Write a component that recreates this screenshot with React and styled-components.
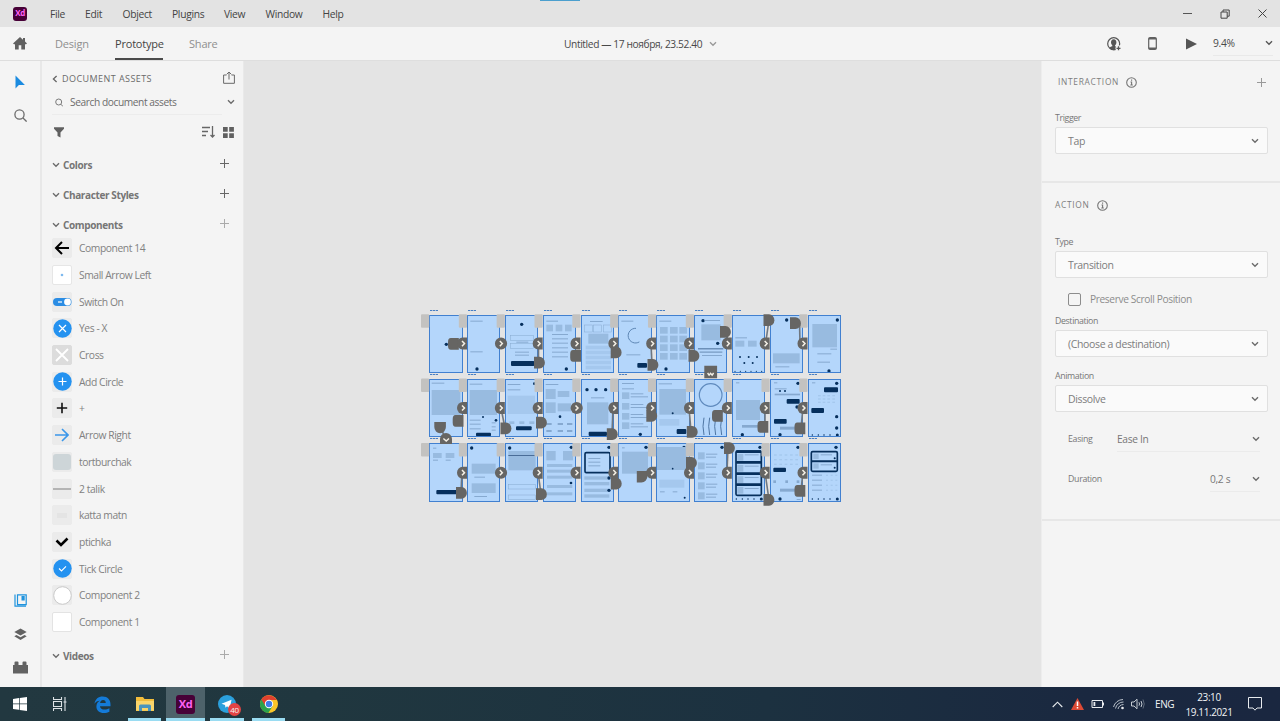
import React from "react";
import styled, { createGlobalStyle } from "styled-components";

const GlobalStyle = createGlobalStyle`
  * { box-sizing: border-box; }
  body { margin: 0; overflow: hidden; background: #f4f4f4; }
  svg { display: block; flex: none; }
`;

const Page = styled.div`
  width: 1280px;
  height: 721px;
  display: flex;
  flex-direction: column;
  font-family: "Open Sans", "Noto Sans", sans-serif;
  font-size: 10.3px;
  letter-spacing: -0.32px;
  color: #6c6c6c;
  line-height: 14px;
  white-space: nowrap;
`;

/* ---------- top bars ---------- */

const MenuBar = styled.header`
  position: relative;
  height: 27px;
  flex: none;
  display: flex;
  align-items: center;
  background: #e3e3e3;
  padding-left: 13px;
`;

const TopAccent = styled.div`
  position: absolute;
  left: 540px;
  top: 0;
  width: 40px;
  height: 1px;
  background: #4b9fce;
`;

const XdBadge = styled.div`
  width: ${(p) => p.$size}px;
  height: ${(p) => p.$size}px;
  flex: none;
  display: flex;
  align-items: center;
  justify-content: center;
  border-radius: 3px;
  background: #470137;
  color: #ff61f6;
  font-weight: 700;
  font-size: ${(p) => p.$font}px;
  line-height: 1;
  letter-spacing: -0.5px;
  padding-bottom: 1px;
`;

const MenuList = styled.nav`
  display: flex;
  margin-left: 23px;
  color: #444;
`;

const MenuItem = styled.span`
  width: ${(p) => p.$w}px;
`;

const WindowButtons = styled.div`
  display: flex;
  align-items: center;
  gap: 28px;
  margin-left: auto;
  padding-right: 13px;
`;

const ToolBar = styled.div`
  height: 34px;
  flex: none;
  display: flex;
  align-items: center;
  background: #f4f4f4;
  border-bottom: 1px solid #dedede;
  padding-left: 13px;
`;

const Tabs = styled.nav`
  display: flex;
  gap: 26px;
  margin-left: 28px;
`;

const Tab = styled.span`
  width: ${(p) => p.$w}px;
  height: 33px;
  line-height: 34px;
  font-size: 11px;
  letter-spacing: -0.2px;
  color: ${(p) => (p.$on ? "#444" : "#8f8f8f")};
  border-bottom: 2px solid ${(p) => (p.$on ? "#4b4b4b" : "transparent")};
`;

const DocTitle = styled.div`
  display: flex;
  align-items: center;
  gap: 7px;
  margin-left: 347px;
  font-size: 10.2px;
  letter-spacing: -0.38px;
  color: #484848;
`;

const ToolBarRight = styled.div`
  display: flex;
  align-items: center;
  margin-left: auto;
  padding-right: 7px;
`;

const Zoom = styled.div`
  width: 60px;
  height: 24px;
  margin-left: 16px;
  display: flex;
  align-items: center;
  justify-content: space-between;
  border-bottom: 1px solid #e9e9e9;
  color: #4a4a4a;
  padding-bottom: 1px;
`;

const IconGap = styled.span`
  width: ${(p) => p.$w}px;
  flex: none;
`;

/* ---------- body ---------- */

const Body = styled.main`
  flex: 1;
  min-height: 0;
  display: flex;
`;

const Rail = styled.aside`
  width: 42px;
  flex: none;
  display: flex;
  flex-direction: column;
  align-items: center;
  background: #f4f4f4;
  border-right: 2px solid #e8e8e8;
  padding: 14px 0 12px 0;
`;

const RailGap = styled.div`
  height: ${(p) => p.$h}px;
  flex: none;
`;

const Assets = styled.aside`
  width: 202px;
  flex: none;
  background: #f4f4f4;
  border-right: 1px solid #e9e9e9;
  padding: 9px 6px 0 10px;
`;

const AssetsHead = styled.div`
  height: 18px;
  display: flex;
  align-items: center;
  gap: 4px;
  font-size: 9px;
  letter-spacing: 0.44px;
  color: #6a6a6a;
  padding-right: 2px;
`;

const Push = styled.div`
  margin-left: auto;
  display: flex;
  align-items: center;
  gap: 8px;
  padding-bottom: ${(p) => p.$lift || 0}px;
`;

const SearchRow = styled.div`
  height: 27px;
  width: 170px;
  display: flex;
  align-items: center;
  border-bottom: 1px solid #ececec;
  padding: 2px 0 0 3px;
  margin-bottom: 6px;
`;

const SearchText = styled.span`
  margin-left: 7px;
  width: 155px;
  flex: none;
  font-size: 10.2px;
  letter-spacing: -0.42px;
`;

const SearchArrow = styled.span`
  margin-left: 2px;
`;

const FilterRow = styled.div`
  height: 22px;
  display: flex;
  align-items: center;
  padding: 0 3px 0 2px;
`;

const Group = styled.div`
  height: 30px;
  margin-top: ${(p) => p.$mt || 0}px;
  display: flex;
  align-items: center;
  gap: 3px;
  font-weight: 700;
  font-size: 10px;
  letter-spacing: -0.38px;
  padding-right: 8px;
  color: #767676;
`;

const PlusWrap = styled.span`
  margin-left: auto;
  padding-bottom: 4px;
`;

const ItemList = styled.div`
  margin-top: -5px;
`;

const Item = styled.div`
  height: 26.7px;
  display: flex;
  align-items: center;
  gap: 7px;
  color: #818181;
  font-size: 10.3px;
  letter-spacing: -0.42px;
`;

const Thumb = styled.div`
  width: 20px;
  height: 20px;
  flex: none;
  background: ${(p) => p.$bg || "#ebebeb"};
  border: 1px solid ${(p) => p.$line || "#ebebeb"};
  border-radius: 2px;
  display: flex;
  align-items: center;
  justify-content: center;
`;

const Canvas = styled.section`
  position: relative;
  flex: 1;
  background: #e4e4e4;
`;

const Board = styled.div`
  position: absolute;
  left: ${(p) => p.$x}px;
  top: ${(p) => p.$y}px;
  width: 33.4px;
  height: 58.5px;
  background: #b4d6fb;
  outline: 1px solid #4180d0;
  outline-offset: -1px;
`;

const BoardLabel = styled.div`
  position: absolute;
  left: 1px;
  top: -5px;
  width: 8px;
  height: 1px;
  background: repeating-linear-gradient(90deg, #477fc4 0 2px, #a9bcd4 2px 3px);
`;

const Wires = styled.svg`
  position: absolute;
  left: 0;
  top: 0;
`;

/* ---------- right panel ---------- */

const Inspector = styled.aside`
  width: 239px;
  flex: none;
  background: #f4f4f4;
  border-left: 1px solid #ededed;
  color: #777;
`;

const Section = styled.section`
  height: ${(p) => p.$h}px;
  padding: ${(p) => p.$pt}px 12px 0 13px;
  border-bottom: 2px solid #e7e7e7;
`;

const Heading = styled.div`
  display: flex;
  align-items: center;
  gap: 7px;
  height: 16px;
  padding-left: ${(p) => p.$pl || 0}px;
  font-size: 8.4px;
  letter-spacing: 0.7px;
  color: #7d7d7d;
`;

const PlusPad = styled.span`
  padding-right: 2px;
`;

const Label = styled.div`
  height: 14px;
  margin-top: ${(p) => p.$mt}px;
  font-size: 8.8px;
  letter-spacing: -0.38px;
`;

const Select = styled.div`
  height: 27px;
  margin-top: 2px;
  display: flex;
  align-items: center;
  justify-content: space-between;
  border: 1px solid #e0e0e0;
  border-radius: 2px;
  background: #fafafa;
  color: #7d7d7d;
  padding: 0 8px 0 12px;
  font-size: 10.5px;
  letter-spacing: -0.36px;
`;

const CheckRow = styled.div`
  height: 16px;
  margin-top: 13px;
  padding-left: 13px;
  display: flex;
  align-items: center;
  gap: 9px;
  color: #8c8c8c;
  font-size: 10.2px;
  letter-spacing: -0.38px;
`;

const Box = styled.span`
  width: 13px;
  height: 13px;
  border: 1.5px solid #8c8c8c;
  border-radius: 2px;
`;

const Field = styled.div`
  display: flex;
  align-items: center;
  margin-top: ${(p) => p.$mt}px;
  height: 26px;
  padding: 0 8px 0 13px;
  font-size: 8.8px;
`;

const FieldValue = styled.div`
  width: ${(p) => p.$w}px;
  height: 26px;
  margin-left: auto;
  display: flex;
  align-items: center;
  justify-content: space-between;
  border-bottom: 1px solid #ebebeb;
  font-size: 10.2px;
`;

/* ---------- taskbar ---------- */

const Taskbar = styled.footer`
  height: 34px;
  flex: none;
  display: flex;
  background: linear-gradient(90deg, #223840 0%, #20373f 25%, #1c3140 60%, #1a2840 85%, #1a2740 100%);
  color: #f2f4f6;
`;

const Task = styled.div`
  position: relative;
  width: ${(p) => p.$w}px;
  margin-right: ${(p) => p.$mr || 0}px;
  display: flex;
  align-items: center;
  justify-content: center;
  background: ${(p) => (p.$active ? "#4d626a" : "transparent")};
  border-bottom: 3px solid ${(p) => (p.$open ? "#9adcf2" : "transparent")};
  padding-top: 3px;
`;

const Count = styled.span`
  position: absolute;
  right: 3px;
  top: 16px;
  width: 13px;
  height: 13px;
  border-radius: 50%;
  background: #e24444;
  font-size: 8px;
  line-height: 13px;
  text-align: center;
`;

const Tray = styled.div`
  margin-left: auto;
  display: flex;
  align-items: center;
  padding-right: 18px;
`;

const Lang = styled.span`
  margin-left: 10px;
  font-size: 10px;
  letter-spacing: -0.4px;
  width: 30px;
`;

const Clock = styled.div`
  text-align: center;
  line-height: 15px;
  font-size: 10px;
  letter-spacing: -0.4px;
  width: 48px;
  padding-top: 1px;
`;

/* ---------- icons ---------- */

const Svg = ({ w = 12, h = w, s = "#6b6b6b", sw = 1.3, box, children, ...rest }) => (
  <svg width={w} height={h} viewBox={box || `0 0 ${w} ${h}`} fill="none" stroke={s} strokeWidth={sw} {...rest}>
    {children}
  </svg>
);
const Chevron = ({ s = "#6b6b6b", w = 8 }) => (
  <Svg w={w} h={6} box="0 0 8 6" s={s} sw={1.4}><path d="M1 1.3 4 4.2 7 1.3" /></Svg>
);
const Plus = ({ s = "#666" }) => (
  <Svg w={9} s={s} sw={1}><path d="M4.5 0v9M0 4.5h9" /></Svg>
);
const Info = () => (
  <Svg w={11} s="#757575" sw={1.1}><circle cx="5.5" cy="5.5" r="4.8" /><path d="M5.6 2.6v1.1M4.5 5h1.1v3M4.3 8h2.5" /></Svg>
);

const thumbs = {
  back: [{}, <Svg w={16} s="#000" sw={2}><path d="M15 8H2M8 2 2 8l6 6" /></Svg>],
  dot: [{ $bg: "#fff", $line: "#e6e6e6" }, <Svg w={6}><circle cx="3" cy="3" r="1.3" fill="#7db9ee" stroke="none" /></Svg>],
  toggle: [{}, <Svg w={19} h={10} s="none"><rect y="1" width="18.5" height="8" rx="4" fill="#2b8de4" /><path d="M5 5h4" stroke="#fff" strokeWidth="1.2" /><circle cx="14.5" cy="5" r="3.4" fill="#fff" /></Svg>],
  yesx: [{}, <Svg w={19} s="#fff" sw={1.2}><circle cx="9.5" cy="9.5" r="9.2" fill="#2492f0" stroke="none" /><path d="m6 6 7 7M13 6l-7 7" /></Svg>],
  cross: [{ $bg: "#dcdcdc", $line: "#dcdcdc" }, <Svg w={14} s="#fff" sw={1.8}><path d="m1 1 12 12M13 1 1 13" /></Svg>],
  add: [{}, <Svg w={19} s="#fff" sw={1.2}><circle cx="9.5" cy="9.5" r="9.2" fill="#2492f0" stroke="none" /><path d="M9.5 5.5v8M5.5 9.5h8" /></Svg>],
  plus: [{}, <Svg w={12} s="#111" sw={1.6}><path d="M6 .8v10.4M.8 6h10.4" /></Svg>],
  right: [{}, <Svg w={14} s="#3b97ea" sw={1.6}><path d="M0 7h13M7 1l6 6-6 6" /></Svg>],
  tile: [{}, <Svg w={18} h={16} s="none"><rect width="18" height="16" rx="3" fill="#cdd5d8" /></Svg>],
  line: [{}, <Svg w={18} h={2} s="#909090" sw={1.2}><path d="M0 1h18" /></Svg>],
  blank: [{}, <Svg w={10} h={5} s="none"><rect width="10" height="5" fill="#e4e4e4" /></Svg>],
  check: [{}, <Svg w={14} h={12} s="#000" sw={2.6}><path d="m1.5 4.500 4.500 4.500 6.500-6.500" /></Svg>],
  tick: [{}, <Svg w={19} s="#fff" sw={1.1}><circle cx="9.5" cy="9.5" r="9.2" fill="#2492f0" stroke="none" /><path d="m6 9.5 2.5 2.4L13 7.4" /></Svg>],
  circle: [{}, <Svg w={19} s="#c9c9c9" sw={1}><circle cx="9.5" cy="9.5" r="8.8" fill="#fff" /></Svg>],
  square: [{ $bg: "#fff", $line: "#e3e3e3" }, null],
};

const items = [
  ["back", "Component 14"], ["dot", "Small Arrow Left"], ["toggle", "Switch On"], ["yesx", "Yes - X"],
  ["cross", "Cross"], ["add", "Add Circle"], ["plus", "+"], ["right", "Arrow Right"], ["tile", "tortburchak"],
  ["line", "2 talik"], ["blank", "katta matn"], ["check", "ptichka"], ["tick", "Tick Circle"],
  ["circle", "Component 2"], ["square", "Component 1"],
];

/* ---------- artboard contents, drawn on a 102 x 177 grid ----------
   l: text line   b: image block   f: faint block   n: navy bar
   d: navy dot    o: navy frame    q: thin frame    r: arc    s: stick */

const rowOf = (k, xs, y, ...r) => xs.map((x) => [k, x, y, ...r]);
const colOf = (k, x, ys, ...r) => ys.map((y) => [k, x, y, ...r]);
const foot = rowOf("d", [13, 31, 48, 66], 168, 2.2).concat([["d", 88, 168, 4.5]]);

const boards = [
  [
    [["d", 52, 88]],
    [["l", 10, 17, 37], ["l", 10, 109, 37], ["d", 30, 162]],
    [["d", 50, 28], ["q", 17, 62, 68, 14], ["l", 34, 80, 36], ["q", 17, 86, 68, 14], ["l", 30, 110, 42], ["l", 30, 119, 42], ["n", 18, 138, 70, 15]],
    [["l", 10, 17, 35], ...rowOf("b", [10, 38, 66], 29, 20, 20), ...colOf("l", 27, [57, 70, 83, 97, 110, 124], 48), ["d", 70, 162]],
    [["l", 27, 18, 38], ...rowOf("q", [10, 38, 67], 30, 24, 21), ["b", 22, 56, 60, 30], ...colOf("f", 14, [92, 107, 122, 137, 152], 76, 11)],
    [["l", 10, 17, 36], ["r", 50, 62, 22], ["l", 25, 118, 42], ["n", 58, 144, 29, 14]],
    [["l", 10, 17, 36], ...[36, 62, 88, 114].flatMap((y) => rowOf("b", [12, 42, 70], y, 23, 20)), ["d", 30, 162]],
    [["d", 27, 17], ["l", 32, 15, 46], ["b", 22, 28, 58, 48], ["d", 71, 85], ["s", 12, 100, 76], ["l", 17, 109, 68, 5], ["l", 24, 120, 60]],
    [["l", 10, 67, 35], ["b", 10, 77, 27, 18], ["b", 48, 77, 26, 18], ...rowOf("d", [24, 50, 75], 126, 3), ...rowOf("d", [37, 62], 144, 3), ...rowOf("d", [9, 25, 41, 57, 73, 89], 169, 1.8)],
    [["d", 50, 15], ["b", 9, 115, 80, 30], ["l", 16, 154, 42]],
    [["d", 88, 15], ["b", 13, 27, 74, 70], ["l", 67, 101, 20], ["l", 28, 115, 42], ["l", 28, 140, 38], ["d", 63, 168]],
  ],
  [
    [["l", 8, 11, 38], ["b", 8, 33, 86, 75]],
    [["l", 8, 14, 38], ["b", 8, 33, 82, 75], ["d", 48, 114, 3], ...colOf("l", 8, [122, 134, 148], 33), ...colOf("l", 74, [130, 142, 152], 12), ["d", 87, 124, 4], ["n", 27, 161, 45, 11]],
    [["l", 8, 15, 38], ["l", 8, 31, 38], ["d", 88, 14, 4], ["f", 8, 50, 82, 55], ...rowOf("b", [13, 43, 73], 127, 15, 8), ["n", 33, 142, 47, 12]],
    [["l", 8, 15, 38], ["b", 8, 30, 30, 30], ["b", 44, 36, 35, 18], ["b", 8, 70, 30, 32], ["b", 44, 73, 40, 24], ["d", 51, 113, 4], ...rowOf("l", [10, 44, 72], 132, 16, 6), ...rowOf("l", [10, 44, 72], 153, 16, 6)],
    [...rowOf("d", [18, 45, 74], 32, 5), ["l", 30, 55, 40], ["b", 18, 70, 64, 66], ["n", 23, 158, 55, 13]],
    [["l", 12, 12, 36], ["l", 12, 28, 36], ...[40, 72, 102, 130].flatMap((y) => [["b", 12, y, 22, 20], ["l", 38, y + 3, 38], ["l", 38, y + 12, 52]]), ["d", 67, 166]],
    [["l", 8, 13, 40], ["b", 10, 30, 80, 77], ["d", 50, 103, 3], ["f", 10, 120, 60, 20], ["n", 62, 150, 29, 15]],
    [["r", 50, 48, 34, 1], ...rowOf("v", [27, 44, 62, 80], 116, 3, 52)],
    [["l", 12, 10, 10], ["b", 12, 63, 72, 60], ["l", 30, 138, 50, 8], ["d", 31, 167]],
    [["l", 12, 10, 10], ["d", 84, 13], ["l", 14, 28, 36], ["d", 30, 36, 3], ["d", 45, 36, 3], ["l", 14, 44, 76, 5], ["n", 50, 60, 39, 14], ["d", 81, 84, 5], ["n", 12, 120, 38, 14], ["l", 30, 143, 50, 9], ["d", 30, 167]],
    [["l", 12, 10, 10], ["d", 86, 13], ["n", 48, 25, 42, 15], ...[48, 58, 68].flatMap((y) => rowOf("f", [30, 44, 58, 73], y, 8, 4)), ["n", 10, 87, 38, 15], ["d", 86, 113], ["d", 86, 147], ...foot],
  ],
  [
    [["l", 12, 14, 10], ...rowOf("b", [12, 50], 30, 26, 15), ["l", 12, 50, 15], ["l", 50, 50, 15], ["n", 22, 141, 70, 13]],
    [["d", 14, 15], ["b", 14, 62, 72, 30], ["l", 22, 101, 32], ["b", 14, 121, 72, 29], ["l", 22, 159, 38]],
    [["d", 14, 15], ["b", 10, 24, 82, 58], ["s", 10, 36, 82], ["q", 10, 125, 82, 13], ["q", 10, 156, 82, 13]],
    [["d", 85, 13], ["b", 10, 24, 28, 28], ["b", 60, 24, 30, 28], ...colOf("b", 12, [63, 80, 98, 126, 148], 76, 9), ["d", 84, 120, 4]],
    [["d", 84, 13], ["o", 12, 29, 75, 60], ...colOf("l", 22, [45, 56, 67], 36), ...colOf("b", 10, [100, 117, 137, 154], 75, 10), ["d", 84, 105], ["d", 84, 142]],
    [["d", 84, 13], ["b", 12, 26, 78, 66], ["l", 12, 13, 8]],
    [["d", 84, 13], ["b", 2, 12, 92, 69], ["d", 50, 77, 2.5], ["f", 10, 110, 75, 24], ["l", 12, 145, 14], ["l", 50, 145, 14], ["d", 86, 164, 3]],
    [["d", 84, 13], ...[28, 58, 88, 118, 148].flatMap((y) => [["b", 12, y, 20, 21], ["l", 36, y + 4, 34], ["l", 36, y + 13, 30]])],
    [["d", 84, 13], ...colOf("b", 16, [33, 66, 100, 132], 18, 20), ...colOf("l", 38, [34, 68, 102, 135], 42), ["o", 12, 24, 76, 133], ...colOf("n", 12, [22, 54, 88, 121], 76, 8), ...foot],
    [["d", 84, 13], ...[34, 48, 62].flatMap((y) => rowOf("f", [12, 28, 44, 60, 76], y, 8, 4)), ["n", 10, 74, 38, 13], ...rowOf("l", [10, 46, 80], 112, 8, 8), ["l", 30, 137, 50, 9], ["d", 30, 168], ["l", 80, 168, 12]],
    [["d", 84, 13], ["b", 16, 32, 16, 16], ["b", 16, 61, 16, 16], ...colOf("l", 38, [34, 64], 34), ["o", 10, 26, 78, 59], ["n", 10, 52, 78, 6], ["d", 80, 46, 3], ["d", 80, 74, 3], ...[95, 110, 125, 140].flatMap((y) => [["l", 12, y, 30], ...rowOf("f", [54, 68, 82], y, 6, 4)]), ...foot],
  ],
];

const navy = "#062f5c";
function Mark({ m }) {
  const [k, x, y, a, b] = m;
  if (k === "l") return <rect x={x} y={y} width={a} height={b || 3} fill="#86a9d0" />;
  if (k === "b") return <rect x={x} y={y} width={a} height={b} fill="#98bbe0" />;
  if (k === "f") return <rect x={x} y={y} width={a} height={b} fill="#a5c8ee" />;
  if (k === "n") return <rect x={x} y={y} width={a} height={b} rx={Math.min(3, b / 3)} fill={navy} />;
  if (k === "d") return <circle cx={x} cy={y} r={a || 5} fill={navy} />;
  if (k === "o") return <rect x={x} y={y} width={a} height={b} rx="4" fill="none" stroke={navy} strokeWidth="5" />;
  if (k === "q") return <rect x={x} y={y} width={a} height={b} fill="none" stroke="#86a9d0" strokeWidth="1.5" />;
  if (k === "s") return <rect x={x} y={y} width={a} height="3" fill="#4a6d98" />;
  if (k === "v") return <path d={`M${x + 3} ${y}q-6 ${b / 2} 0 ${b}`} fill="none" stroke="#4f76a3" strokeWidth={a} />;
  if (b) return <circle cx={x} cy={y} r={a} fill="none" stroke="#5f8abd" strokeWidth="3.5" />;
  return <path d={`M${x + 4} ${y - a}a${a} ${a} 0 1 0 10 ${a * 1.85}`} fill="none" stroke="#5d86b4" strokeWidth="3" />;
}

const colX = (i) => 429.2 + i * 37.83;
const rowY = [314.6, 378.9, 443.4];

/* landing tabs: x, y, side that is flat (l, r, t, b) */
const tabs = [
  [448, 338, "r"], [534, 356.8, "l"], [570.2, 350, "r"], [610.7, 346.5, "l"], [647.5, 359, "l"], [688.5, 350, "l"],
  [720, 326, "l"], [763.5, 314.3, "l"], [790, 317.3, "l"],
  [434.3, 422, "t"], [452.7, 415, "r"], [500.5, 422.5, "l"], [536, 416.8, "l"], [606.8, 428.3, "l"], [646.3, 410, "l"],
  [686.8, 426, "l"], [712, 410, "r"], [757.5, 421, "r"], [794.5, 422.5, "r"],
  [456, 487, "l"], [536, 488.3, "l"], [610.8, 477.8, "l"], [636.8, 471, "b"], [686, 457, "l"],
  [724, 442.2, "l"], [763.5, 494, "l"], [794.5, 485, "r"],
];
const links = [
  [453, 344, 462, 344], [538.5, 344, 538.5, 362], [651, 344, 652, 364], [727, 333, 727.5, 344], [769, 320, 765.5, 344], [799.5, 323, 800, 344],
  [440, 428, 446, 438], [501, 408, 505, 428], [613, 408, 612, 433], [689, 408, 691, 431], [717, 416, 727, 408], [765, 408, 765, 426], [803, 408, 801, 428],
  [462, 472, 461, 492], [538, 472, 541, 494], [613, 472, 615, 483], [643, 477, 651, 472], [728, 448, 727, 472], [765, 472, 769, 500], [803, 472, 801, 490],
];

function tabPath([x, y, side]) {
  if (side === "l") return `M${x} ${y}h5.5a5.4 5.9 0 0 1 0 11.8h-5.5z`;
  if (side === "t") return `M${x} ${y}h11.6v5a5.8 6.2 0 0 1-11.6 0z`;
  if (side === "b") return `M${x} ${y}h10.6v5a6 6 0 0 1-6 6.5h-4.6z`;
  return `M${x + 10.8} ${y}h-8a2.8 4 0 0 0-2.8 4v3.7a2.8 4 0 0 0 2.8 4h8z`;
}

function Wiring() {
  const cols = [...Array(11).keys()];
  return (
    <Wires width="797" height="626" viewBox="244 61 797 626">
      {rowY.map((y, r) =>
        cols
          .filter((c) => !(r === 0 && c === 9) && !(r === 2 && c === 8))
          .map((c) => <rect key={`${r}-${c}`} x={colX(c) - 8.2} y={y - 0.3} width="8.2" height="13.5" rx="1" fill="#c3c2c0" />)
      )}
      <g stroke="#6f7780" strokeWidth="1.6">
        {links.map((l, i) => <path key={i} d={`M${l[0]} ${l[1]}L${l[2]} ${l[3]}`} />)}
      </g>
      <g fill="#666563">
        {tabs.map((t, i) => <path key={i} d={tabPath(t)} />)}
        <path d="M704.3 365.8h12.8v12.5h-12.8zM440 444v-5a6 6 0 0 1 12 0v5z" />
      </g>
      {[343.6, 408, 472.7].map((y, r) =>
        cols.slice(0, 10).map((c) => {
          const x = 462.6 + c * 37.83;
          const round = (c === 1 && r !== 1) || (c === 3 && r === 1);
          return (
            <g key={`${r}-${c}`}>
              <path fill="#666563" d={round ? `M${x - 5.5} ${y}a6.1 6 0 1 1 12.2 0a6.1 6 0 1 1-12.2 0z` : `M${x + 4.4} ${y - 6}h-4.4a5.6 6 0 0 0 0 12h4.4z`} />
              <path fill="none" stroke="#f5f0e6" strokeWidth="1.5" d={`M${x - 0.6} ${y - 2.6}l2.5 2.6l-2.5 2.6`} />
            </g>
          );
        })
      )}
      <path d="m443.4 438.5 2.8 2.6 2.8-2.6M707.6 373l1.500 2.200 1.500-1.800 1.500 1.800 1.500-2.200" fill="none" stroke="#f5f0e6" strokeWidth="1.4" />
    </Wires>
  );
}

const menus = [["File", 35], ["Edit", 37.5], ["Object", 49.5], ["Plugins", 52], ["View", 41.5], ["Window", 57], ["Help", 30]];

export default function App() {
  return (
    <Page>
      <GlobalStyle />
      <MenuBar>
        <TopAccent />
        <XdBadge $size={14} $font={8}>Xd</XdBadge>
        <MenuList>{menus.map(([t, w]) => <MenuItem key={t} $w={w}>{t}</MenuItem>)}</MenuList>
        <WindowButtons>
          <Svg w={9} h={9} s="#555" sw={1}><path d="M0 4.5h9" /></Svg>
          <Svg w={10} h={10} s="#444" sw={1}><path d="M1 3h6.2v6.2H1zM3 3V1h6.2v6.2h-2" /></Svg>
          <Svg w={9} h={9} s="#444" sw={1}><path d="m.5.5 8 8m0-8-8 8" /></Svg>
        </WindowButtons>
      </MenuBar>

      <ToolBar>
        <Svg w={14} h={13} s="none"><path d="M7 0 0 6.4 1 7.3h1V12.5h3.7V8.3h2.6v4.2H12V7.3h1l1-.9-2-1.9V1h-2v1.7z" fill="#606060" /></Svg>
        <Tabs>
          <Tab $w={34}>Design</Tab>
          <Tab $w={48} $on>Prototype</Tab>
          <Tab $w={28}>Share</Tab>
        </Tabs>
        <DocTitle>Untitled — 17 ноября, 23.52.40 <Chevron s="#999" /></DocTitle>
        <ToolBarRight>
          <Svg w={14} h={14} s="none"><circle cx="6.7" cy="6.7" r="6" stroke="#555" strokeWidth="1.2" /><path d="M6.7 2.2c-1.9 0-2.7 1.5-2.7 3.1 0 1.4.6 2.5 1.3 3v1c-1.5.4-2.6 1-3 1.900a6 6 0 0 0 7.700 1L9.600 9.700l-1.500-.5V8.300c.8-.6 1.300-1.700 1.300-3 0-1.600-.8-3.100-2.700-3.100z" fill="#555" /><circle cx="11.5" cy="11.3" r="3" fill="#f4f4f4" /><path d="M11.5 9.3v4M9.500 11.300h4" stroke="#555" /></Svg>
          <IconGap $w={27} />
          <Svg w={9} h={13} s="#606060" sw={1.2}><rect x=".7" y=".7" width="7.6" height="11.6" rx="1.3" /><path d="M.7 1.800h7.600M.7 11.200h7.600" strokeWidth="1.6" /></Svg>
          <IconGap $w={29} />
          <Svg w={11} h={12} s="none"><path d="M0 .5v11L11 6z" fill="#555" /></Svg>
          <Zoom>9.4%<Chevron s="#555" /></Zoom>
        </ToolBarRight>
      </ToolBar>

      <Body>
        <Rail>
          <Svg w={12} h={15} s="none"><path d="M1.5 .5v13l3.400-3.500h6z" fill="#1b8be0" /></Svg>
          <RailGap $h={19} />
          <Svg w={13} s="#6b6b6b" sw={1.3}><circle cx="5.5" cy="5.5" r="4.6" /><path d="m9 9 3.600 3.600" /></Svg>
          <RailGap $h={472} />
          <Svg w={13} h={13} s="#1f93dd" sw={1.2}><path d="M3.500.8h8.700v9.800H3.500zM1 .500v11.700h11" /><path d="M7.500 2h3.200v4.500H7.500z" fill="#1f93dd" stroke="none" /></Svg>
          <RailGap $h={21} />
          <Svg w={13} h={13} s="none"><path d="M6.500.5.3 4l6.200 3.500L12.700 4zM.3 8.300l2.200-1.200 4 2.200 4-2.200 2.200 1.200-6.200 3.600z" fill="#626262" /></Svg>
          <RailGap $h={20} />
          <Svg w={15} h={13} s="none"><path d="M0 4h1.500V1.500q0-1 1-1h2q1 0 1 1V4h4V1.500q0-1 1-1h2q1 0 1 1V4H15v8.500H0z" fill="#626262" /></Svg>
        </Rail>

        <Assets>
          <AssetsHead>
            <Svg w={6} h={8} s="#666" sw={1.3}><path d="M4.600 1 1.400 4l3.200 3" /></Svg>
            DOCUMENT ASSETS
            <Push $lift={3}><Svg w={12} h={13} s="#6a6a6a" sw={1}><path d="M3.500 4H.6v8.300h10.800V4H8.500M6 8.500V1.200M3.700 3.300 6 1l2.300 2.300" /></Svg></Push>
          </AssetsHead>
          <SearchRow>
            <Svg w={8} h={9} s="#7a7a7a" sw={1}><circle cx="3.7" cy="4" r="3" /><path d="m5.900 6.200 2.100 2.300" /></Svg>
            <SearchText>Search document assets</SearchText>
            <SearchArrow><Chevron /></SearchArrow>
          </SearchRow>
          <FilterRow>
            <Svg w={10} h={11} s="none"><path d="M0 .3h10v1.500L6.500 5.500v5L3.500 9V5.500L0 1.800z" fill="#606060" /></Svg>
            <Push>
              <Svg w={13} h={12} s="#666" sw={1.3}><path d="M0 1.500h8M0 5.500h6M0 9.500h4M10.500 0v10.500M8.500 9l2 2 2-2" /></Svg>
              <Svg w={11} h={11} s="none"><path d="M0 0h4.700v4.700H0zM6.200 0h4.700v4.700H6.200zM0 6.200h4.700v4.700H0zM6.200 6.200h4.700v4.700H6.200z" fill="#606060" /></Svg>
            </Push>
          </FilterRow>
          <Group $mt={7}><Chevron />Colors<PlusWrap><Plus /></PlusWrap></Group>
          <Group><Chevron />Character Styles<PlusWrap><Plus /></PlusWrap></Group>
          <Group><Chevron />Components<PlusWrap><Plus s="#aaa" /></PlusWrap></Group>
          <ItemList>
            {items.map(([k, t]) => (
              <Item key={t}><Thumb {...thumbs[k][0]}>{thumbs[k][1]}</Thumb>{t}</Item>
            ))}
          </ItemList>
          <Group $mt={6}><Chevron />Videos<PlusWrap><Plus s="#aaa" /></PlusWrap></Group>
        </Assets>

        <Canvas>
          {boards.map((row, r) => row.map((marks, c) => (
            <Board key={`${r}-${c}`} $x={colX(c) - 244} $y={rowY[r] - 61}>
              <BoardLabel />
              <Svg w={34} h={59} box="0 0 102 177" s="none">{marks.map((m, i) => <Mark key={i} m={m} />)}</Svg>
            </Board>
          )))}
          <Wiring />
        </Canvas>

        <Inspector>
          <Section $h={122} $pt={13}>
            <Heading $pl={3}>INTERACTION <Info /><Push><PlusPad><Plus s="#999" /></PlusPad></Push></Heading>
            <Label $mt={21}>Trigger</Label>
            <Select>Tap<Chevron /></Select>
          </Section>
          <Section $h={338} $pt={14}>
            <Heading>ACTION <Info /></Heading>
            <Label $mt={22}>Type</Label>
            <Select>Transition<Chevron /></Select>
            <CheckRow><Box />Preserve Scroll Position</CheckRow>
            <Label $mt={7}>Destination</Label>
            <Select>(Choose a destination)<Chevron /></Select>
            <Label $mt={12}>Animation</Label>
            <Select>Dissolve<Chevron /></Select>
            <Field $mt={14}>Easing<FieldValue $w={143}>Ease In<Chevron /></FieldValue></Field>
            <Field $mt={14}>Duration<FieldValue $w={50}>0,2 s<Chevron /></FieldValue></Field>
          </Section>
        </Inspector>
      </Body>

      <Taskbar>
        <Task $w={40}><Svg w={14} h={14} s="none"><path d="M0 2l6-.9v5.500H0zM6.700 1 14 0v6.600H6.700zM0 7.300h6v5.500L0 12zM6.700 7.300H14V14l-7.300-1z" fill="#fff" /></Svg></Task>
        <Task $w={40}><Svg w={15} h={14} s="#dce2e5" sw={1.1}><path d="M.5 0v2.500h8V0M.5 14v-2.500h8V14M.5 4.500h8v5h-8zM12 0v14M10.500 5h3" /></Svg></Task>
        <Task $w={44} $mr={4}><Svg w={17} h={17} s="none"><path d="M.5 7.800C1.200 3 4.300.5 8.700.5c5 0 7.800 3.500 7.800 7.700v2H6c.2 2.200 2 3.400 4.600 3.400 1.800 0 3.300-.4 4.800-1.300v3.500c-1.600.8-3.400 1.200-5.500 1.200-4.600 0-7.500-2.500-7.500-6.500 0-2.500 1.300-4.700 3.400-5.700C3.500 4.900 1.700 6 .5 7.800zM6.100 7h5.700c0-1.900-1-3-2.700-3C7.500 4 6.400 5.200 6.100 7z" fill="#147bd9" /></Svg></Task>
        <Task $w={33} $mr={5} $open><Svg w={18} h={16} s="none"><path d="M0 1h7l1.500 2H18v12H0z" fill="#f2bd3c" /><path d="M0 5h18v9.500H0z" fill="#fad56b" /><path d="M3 15V10q0-1.500 1.500-1.500h9Q15 8.500 15 10v5h-3v-3H6v3z" fill="#4a94bd" /></Svg></Task>
        <Task $w={39} $mr={5} $open $active><XdBadge $size={19} $font={11}>Xd</XdBadge></Task>
        <Task $w={34} $mr={8} $open>
          <Svg w={18} h={18} s="none"><circle cx="9" cy="9" r="9" fill="#2ba0dc" /><path d="m3.500 8.800 10-4-1.700 8.700-2.800-2.200-1.500 1.400L7 10z" fill="#fff" /></Svg>
          <Count>40</Count>
        </Task>
        <Task $w={33} $open><Svg w={18} h={18} s="none"><circle cx="9" cy="9" r="9" fill="#f9c52a" /><path d="M1.300 4.300A9 9 0 0 0 8.300 18l4.200-6.800L9 9z" fill="#2ba24c" /><path d="M1.300 4.400 5.500 11 9 5H16.800A9 9 0 0 0 1.300 4.400z" fill="#e0412f" /><circle cx="9" cy="9" r="4.2" fill="#fff" /><circle cx="9" cy="9" r="3.2" fill="#3f7de8" /></Svg></Task>
        <Tray>
          <Svg w={11} h={7} s="#e8ebee" sw={1.1}><path d="M.7 6 5.500 1.200 10.300 6" /></Svg>
          <IconGap $w={8} />
          <Svg w={13} h={12} s="none"><path d="M6.500 0 13 12H0z" fill="#dd4a35" /><path d="M6.500 3.500v4.500M6.500 9v1.500" stroke="#fff" strokeWidth="1.5" /></Svg>
          <IconGap $w={7} />
          <Svg w={13} h={8} s="#e8ebee" sw={1}><path d="M1 .5h10.500v7H1zM12.500 2.500v3" /><path d="M2.500 2v4h1.800V2z" fill="#e8ebee" stroke="none" /></Svg>
          <IconGap $w={9} />
          <Svg w={12} h={12} s="#b8c0c9" sw={1}><path d="M.5 9A10 10 0 0 1 10 1.500M2.500 10.500A8 8 0 0 1 10.500 4M5 11a6 6 0 0 1 5.500-4.500" /><circle cx="9.5" cy="10" r="1.3" fill="#e8ebee" stroke="none" /></Svg>
          <IconGap $w={6} />
          <Svg w={14} h={12} s="#c5ccd3" sw={1}><path d="M.5 4h2.500l3-2.800v9.600L3 8H.5zM8 4.300q1 1.700 0 3.400M10 3q2 3 0 6" /><path d="M12 1.500q2.500 4.500 0 9" opacity=".4" /></Svg>
          <Lang>ENG</Lang>
          <Clock>23:10<br />19.11.2021</Clock>
          <IconGap $w={15} />
          <Svg w={14} h={14} s="#e8ebee" sw={1}><path d="M.5.5h13v10.500H9l-2 2.200L5 11H.5z" /></Svg>
        </Tray>
      </Taskbar>
    </Page>
  );
}
